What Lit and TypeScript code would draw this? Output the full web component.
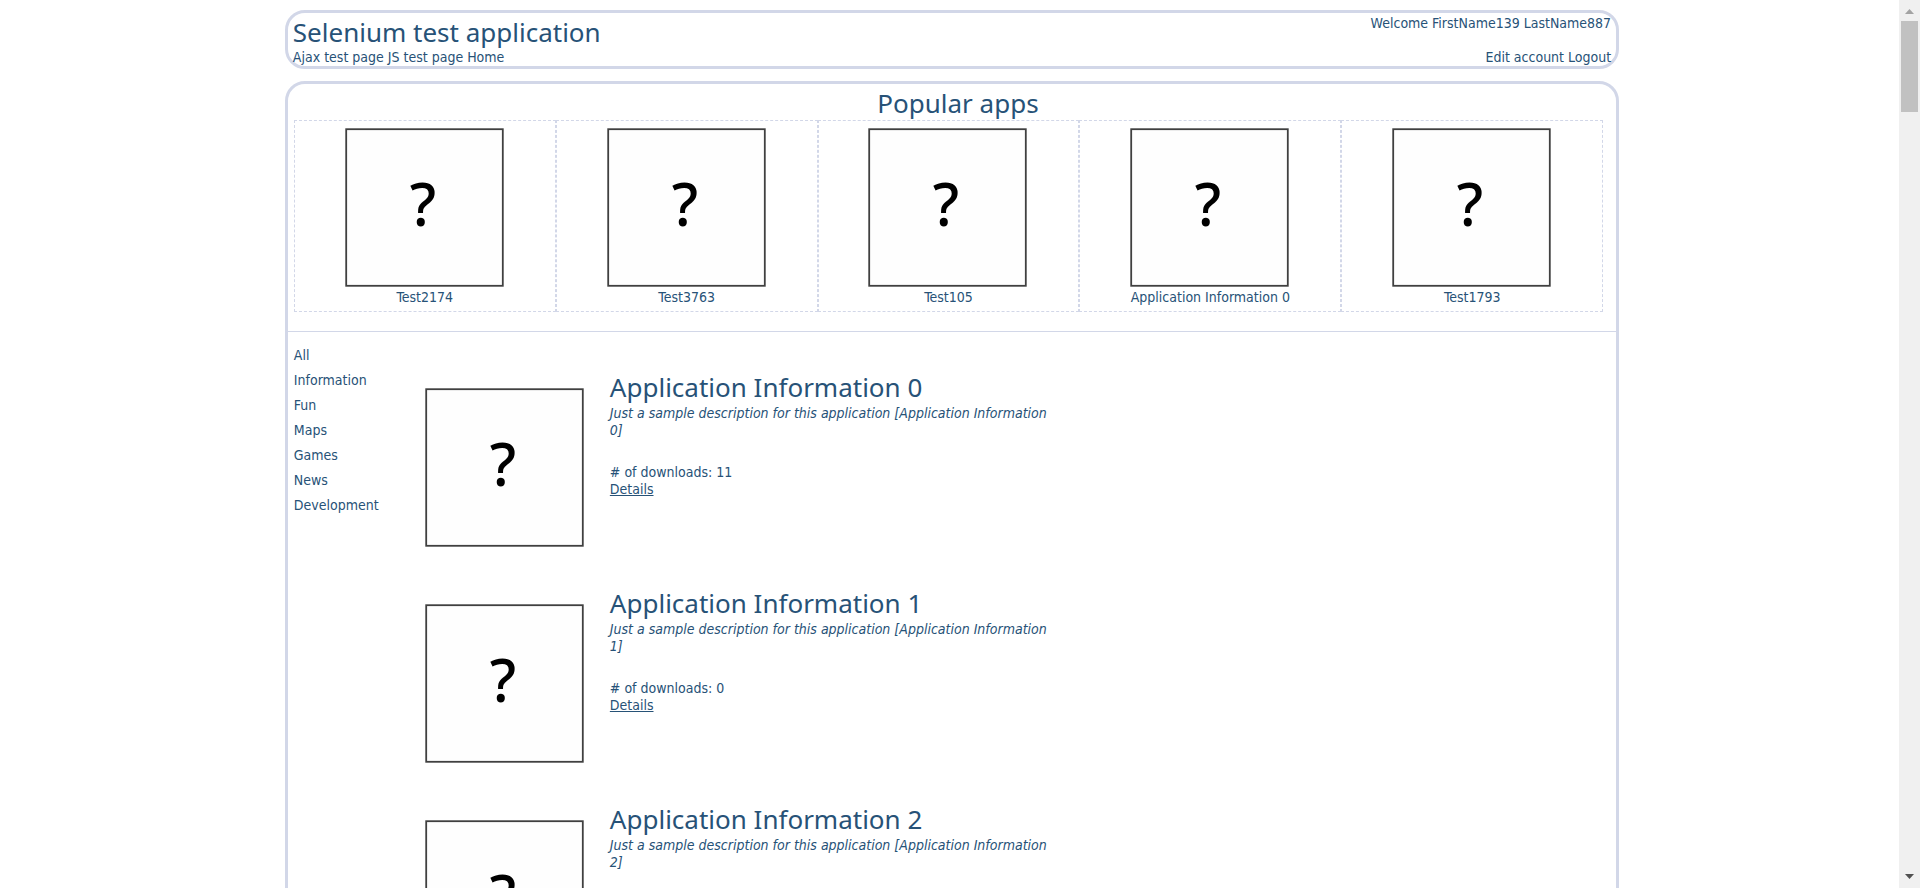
import { LitElement, html, css } from "lit";
import { customElement, property } from "lit/decorators.js";

const NAV_LINKS = ["Ajax test page", "JS test page", "Home"];
const ACCOUNT_LINKS = ["Edit account", "Logout"];
const POPULAR = ["Test2174", "Test3763", "Test105", "Application Information 0", "Test1793"];
const CATEGORIES = ["All", "Information", "Fun", "Maps", "Games", "News", "Development"];
const APPS = [
  { name: "Application Information 0", downloads: 11 },
  { name: "Application Information 1", downloads: 0 },
  { name: "Application Information 2", downloads: 0 },
];

const headings = css`
  .title {
    margin: 0;
    font: 26px/34px "Noto Sans", sans-serif;
  }
`;

/** Placeholder picture for an application without an icon. */
@customElement("app-thumb")
export class AppThumb extends LitElement {
  static styles = css`
    :host {
      display: block;
      flex: none;
      width: 160px;
      height: 160px;
    }
    .frame {
      display: block;
    }
    .mark {
      font: 500 59px "Noto Sans", sans-serif;
      text-anchor: middle;
    }
  `;

  render() {
    return html`
      <svg class="frame" width="160" height="160" viewBox="0 0 160 160" role="img" aria-label="No icon">
        <rect x="1.2" y="1.2" width="156.6" height="156.6" fill="#fefefe" stroke="#404040" stroke-width="1.8" />
        <text class="mark" x="78" y="98">?</text>
      </svg>
    `;
  }
}

/** One application in the list. */
@customElement("app-entry")
export class AppEntry extends LitElement {
  @property() name = "";
  @property({ type: Number }) downloads = 0;

  static styles = [
    headings,
    css`
      :host {
        display: flex;
        gap: 25px;
        min-height: 216px;
      }
      .thumb {
        margin-top: 18px;
      }
      .info {
        width: 445px;
      }
      .description {
        margin: 1px 0 25px;
        font-style: italic;
      }
      .downloads {
        margin: 0;
      }
      .details {
        color: inherit;
      }
    `,
  ];

  render() {
    return html`
      <app-thumb class="thumb"></app-thumb>
      <div class="info">
        <h2 class="title">${this.name}</h2>
        <p class="description">Just a sample description for this application [${this.name}]</p>
        <p class="downloads"># of downloads: ${this.downloads}</p>
        <a class="details" href="#">Details</a>
      </div>
    `;
  }
}

@customElement("app-root")
export class AppRoot extends LitElement {
  static styles = [
    headings,
    css`
      :host {
        display: flex;
        height: 100vh;
        overflow: hidden;
        background: #fff;
        color: #275277;
        font: 14px/17px "DejaVu Sans Condensed", "DejaVu Sans", sans-serif;
      }
      a {
        color: inherit;
        text-decoration: none;
      }
      .page {
        flex: 1;
        min-width: 0;
        padding-top: 10px;
        overflow: hidden;
      }
      .panel {
        box-sizing: border-box;
        width: calc(70% + 5px);
        margin-left: 15%;
        border: 3px solid #d2d7e8;
        border-radius: 20px;
      }
      .header {
        display: flex;
        justify-content: space-between;
        margin-bottom: 12px;
        padding: 2px 5px 0;
      }
      .account {
        display: flex;
        flex-direction: column;
        justify-content: space-between;
        text-align: right;
      }
      .main {
        padding-top: 2px;
      }
      .popular-title {
        padding-left: 12px;
        text-align: center;
      }
      .popular {
        display: grid;
        grid-template-columns: repeat(5, 1fr);
        margin: 0 13px 19px 6px;
      }
      .card {
        display: flex;
        flex-direction: column;
        align-items: center;
        gap: 1px;
        padding: 7px 0 5px;
        border: 1px dashed #d2d7e8;
      }
      .content {
        display: flex;
        border-top: 1px solid #d2d7e8;
      }
      .categories {
        box-sizing: border-box;
        width: 137px;
        padding: 11px 6px;
        line-height: 25px;
      }
      .category {
        display: block;
      }
      .list {
        padding-top: 38px;
      }
      .scrollbar {
        display: flex;
        flex-direction: column;
        align-items: center;
        width: 21px;
        background: #f0f0f0;
      }
      .arrow {
        display: block;
        flex: none;
      }
      .thumb {
        width: 17px;
        height: 91px;
        margin-bottom: auto;
        background: #c1c1c1;
      }
    `,
  ];

  render() {
    return html`
      <div class="page">
        <header class="panel header">
          <div>
            <h1 class="title">Selenium test application</h1>
            <nav>${NAV_LINKS.map((label) => html`<a href="#">${label}</a> `)}</nav>
          </div>
          <div class="account">
            <div>Welcome FirstName139 LastName887</div>
            <div>${ACCOUNT_LINKS.map((label) => html`<a href="#">${label}</a> `)}</div>
          </div>
        </header>
        <main class="panel main">
          <h2 class="title popular-title">Popular apps</h2>
          <div class="popular">
            ${POPULAR.map(
              (name) => html`<a class="card" href="#"><app-thumb></app-thumb><span>${name}</span></a>`
            )}
          </div>
          <div class="content">
            <nav class="categories">
              ${CATEGORIES.map((name) => html`<a class="category" href="#">${name}</a>`)}
            </nav>
            <div class="list">
              ${APPS.map((app) => html`<app-entry .name=${app.name} .downloads=${app.downloads}></app-entry>`)}
            </div>
          </div>
        </main>
      </div>
      <div class="scrollbar" aria-hidden="true">
        <svg class="arrow" width="21" height="21" viewBox="0 0 21 21"><path d="M6 14 10.5 9 15 14z" fill="#a3a3a3" /></svg>
        <div class="thumb"></div>
        <svg class="arrow" width="21" height="21" viewBox="0 0 21 21"><path d="M6 7 10.5 12 15 7z" fill="#505050" /></svg>
      </div>
    `;
  }
}
